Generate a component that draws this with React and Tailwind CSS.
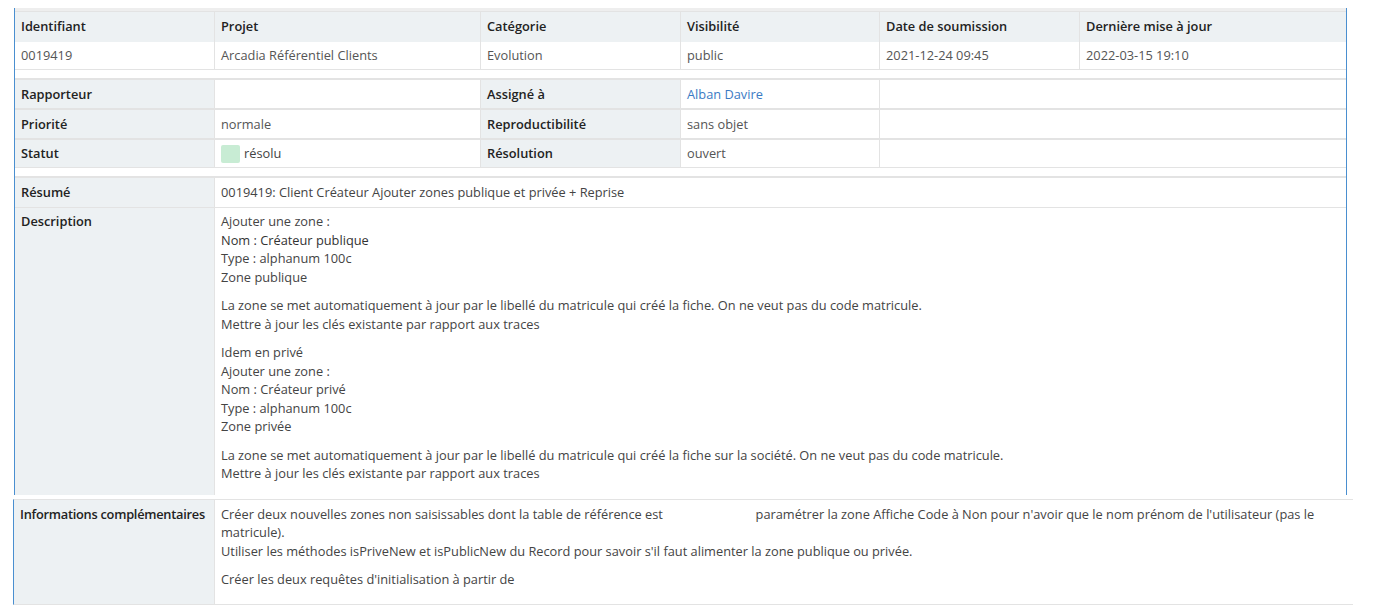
import React from 'react';

const label = 'bg-[#edf1f3] px-[6px] font-semibold text-[#222] whitespace-nowrap';
const value = 'bg-white px-[6px] text-[#555]';
const line = 'border-[#e3e3e3]';

function HeadRow() {
  const heads = ['Identifiant', 'Projet', 'Catégorie', 'Visibilité', 'Date de soumission', 'Dernière mise à jour'];
  const vals = ['0019419', 'Arcadia Référentiel Clients', 'Evolution', 'public', '2021-12-24 09:45', '2022-03-15 19:10'];
  return (
    <div className="grid grid-cols-[200px_266px_200px_199px_200px_1fr]">
      {heads.map((h, i) => (
        <div
          key={h}
          className={`${label} flex h-[30px] items-center pb-[1px] ${i < 5 ? `border-r ${line}` : ''}`}
        >
          {h}
        </div>
      ))}
      {vals.map((v, i) => (
        <div
          key={v}
          className={`${value} flex h-[28px] items-center border-b ${line} ${i < 5 ? 'border-r' : ''}`}
        >
          {v}
        </div>
      ))}
    </div>
  );
}

function InfoRow({ a, av, b, bv, last }) {
  return (
    <div className={`grid h-[30px] grid-cols-[200px_266px_200px_199px_1fr] border-t-2 ${line} ${last ? 'border-b' : ''}`}>
      <div className={`${label} flex items-center border-r ${line}`}>{a}</div>
      <div className={`${value} flex items-center border-r ${line}`}>{av}</div>
      <div className={`${label} flex items-center border-r ${line}`}>{b}</div>
      <div className={`${value} flex items-center border-r ${line}`}>{bv}</div>
      <div className="bg-white" />
    </div>
  );
}

export default function App() {
  return (
    <div className="min-h-[614px] bg-white pt-2 font-['Open_Sans',sans-serif] text-[12.8px] leading-[18.5px]">
      <div className="ml-[14px] w-[1333px] border-x border-[#4a8fd0]">
        <div className="h-[3px] bg-[#eeeeee]" />
        <div className={`border-t ${line}`} />
        <HeadRow />

        <div className="h-[8px] bg-white" />
        <InfoRow a="Rapporteur" av="" b="Assigné à" bv={<span className="text-[#3b7bc4]">Alban Davire</span>} />
        <InfoRow a="Priorité" av="normale" b="Reproductibilité" bv="sans objet" />
        <InfoRow
          a="Statut"
          av={
            <span className="flex items-center gap-[4px]">
              <span className="inline-block h-[18px] w-[19px] rounded-[2px] bg-[#c8ecd4]" />
              <span className="text-[#444]">résolu</span>
            </span>
          }
          b="Résolution"
          bv="ouvert"
          last
        />

        <div className="h-[8px] bg-white" />
        <div className={`grid grid-cols-[200px_1fr] border-t-2 ${line}`}>
          <div className={`${label} flex h-[29px] items-center border-r ${line}`}>Résumé</div>
          <div className="flex h-[29px] items-center px-[6px] text-[#444]">
            0019419: Client Créateur Ajouter zones publique et privée + Reprise
          </div>
        </div>
        <div className={`grid grid-cols-[200px_1fr] border-t ${line}`}>
          <div className={`${label} border-r pt-[4px] ${line}`}>Description</div>
          <div className="px-[6px] pt-[4px] pb-[12px] text-[#444]">
            <p>Ajouter une zone :</p>
            <p className="text-[#333]">Nom : Créateur publique</p>
            <p>Type : alphanum 100c</p>
            <p>Zone publique</p>
            <p className="mt-[10px]">
              La zone se met automatiquement à jour par le libellé du matricule qui créé la fiche. On ne veut pas du code matricule.
            </p>
            <p>Mettre à jour les clés existante par rapport aux traces</p>
            <p className="mt-[10px]">Idem en privé</p>
            <p>Ajouter une zone :</p>
            <p>Nom : Créateur privé</p>
            <p>Type : alphanum 100c</p>
            <p>Zone privée</p>
            <p className="mt-[10px]">
              La zone se met automatiquement à jour par le libellé du matricule qui créé la fiche sur la société. On ne veut pas du code matricule.
            </p>
            <p>Mettre à jour les clés existante par rapport aux traces</p>
          </div>
        </div>
      </div>

      <div className={`ml-[13px] mt-[4px] grid w-[1340px] grid-cols-[201px_1fr] border-l border-l-[#4a8fd0] border-y ${line}`}>
        <div className={`${label} border-r pt-[5px] tracking-[-0.25px] ${line}`}>Informations complémentaires</div>
        <div className="px-[6px] pt-[5px] pb-[15px] text-[#444]">
          <p>
            Créer deux nouvelles zones non saisissables dont la table de référence est{' '}
            <span className="inline-block w-[86px]" />{' '}
            paramétrer la zone Affiche Code à Non pour n'avoir que le nom prénom de l'utilisateur (pas le matricule).
            <br />
            Utiliser les méthodes isPriveNew et isPublicNew du Record pour savoir s'il faut alimenter la zone publique ou privée.
          </p>
          <p className="mt-[10px]">Créer les deux requêtes d'initialisation à partir de</p>
        </div>
      </div>
    </div>
  );
}
